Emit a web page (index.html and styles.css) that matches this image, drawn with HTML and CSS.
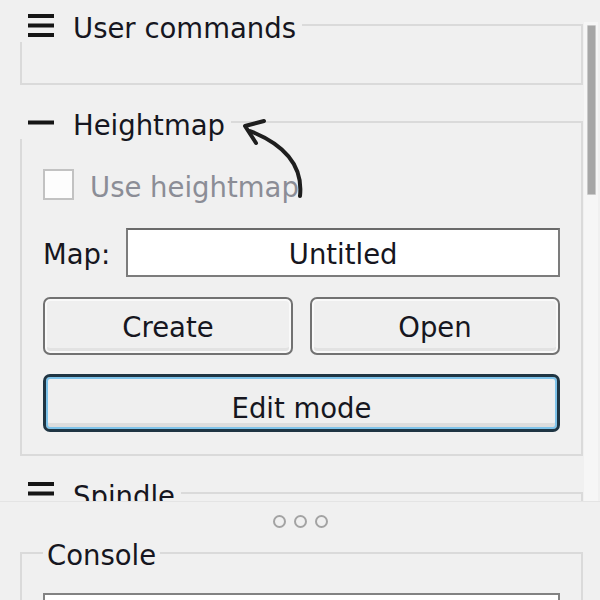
FILE: index.html
```html
<!DOCTYPE html>
<html>
<head>
<meta charset="utf-8">
<link rel="stylesheet" href="styles.css">
</head>
<body>
<div class="dock">
  <div class="scroll">
    <div class="content">
      <fieldset class="group">
        <legend class="title">
          <svg class="ico" width="26" height="23" viewBox="0 0 26 23"><rect x="0" y="0" width="26" height="4"/><rect x="0" y="9.5" width="26" height="4"/><rect x="0" y="19" width="26" height="4"/></svg>
          <span class="ttext">User commands</span>
        </legend>
        <div class="empty"></div>
      </fieldset>
      <fieldset class="group">
        <legend class="title">
          <svg class="ico" width="26" height="23" viewBox="0 0 26 23"><rect x="0" y="9.5" width="26" height="4"/></svg>
          <span class="ttext">Heightmap</span>
        </legend>
        <div class="body">
          <label class="checkrow"><span class="check"></span><span class="ctext">Use heightmap</span></label>
          <div class="maprow"><span class="lbl">Map:</span><div class="input">Untitled</div></div>
          <div class="btnrow"><div class="btn">Create</div><div class="btn">Open</div></div>
          <div class="btn default">Edit mode</div>
        </div>
      </fieldset>
      <fieldset class="group">
        <legend class="title">
          <svg class="ico" width="26" height="23" viewBox="0 0 26 23"><rect x="0" y="0" width="26" height="4"/><rect x="0" y="9.5" width="26" height="4"/><rect x="0" y="19" width="26" height="4"/></svg>
          <span class="ttext">Spindle</span>
        </legend>
        <div class="spacer"></div>
      </fieldset>
    </div>
    <div class="vscroll"><div class="thumb"></div></div>
  </div>
  <div class="splitter"><span class="dot"></span><span class="dot"></span><span class="dot"></span></div>
  <fieldset class="group console">
    <legend class="ctitle">Console</legend>
    <div class="textedit"></div>
  </fieldset>
</div>
<svg class="arrow" width="600" height="600" viewBox="0 0 600 600">
  <path d="M 300 196 C 303 168, 288 146, 250 131" />
  <path d="M 264 121 L 245 126 L 256 143" />
</svg>
</body>
</html>
```
FILE: styles.css
```css
html, body {
  margin: 0;
  padding: 0;
}
body {
  width: 600px;
  height: 600px;
  overflow: hidden;
  position: relative;
  background: #f0f0f0;
  font-family: "DejaVu Sans", "Liberation Sans", sans-serif;
  font-size: 27.5px;
  color: #161620;
}
.dock {
  display: flex;
  flex-direction: column;
}
.scroll {
  display: flex;
  height: 501px;
  overflow: hidden;
  border-bottom: 1px solid #e4e4e4;
}
.content {
  flex: none;
  width: 563px;
  padding: 8px 0 0 20px;
  display: flex;
  flex-direction: column;
  gap: 20px;
}
.group {
  margin: 0;
  padding: 0;
  min-width: 0;
  border: 2px solid #dadada;
}
.title {
  display: flex;
  align-items: center;
  gap: 19px;
  height: 34px;
  line-height: 34px;
  margin-left: -2px;
  padding: 0 6px 0 8px;
  background: #f0f0f0;
}
.ttext {
  margin-top: 5px;
}
.ico {
  fill: #151515;
  display: block;
}
.empty {
  height: 41px;
}
.spacer {
  height: 120px;
}
.body {
  display: flex;
  flex-direction: column;
  gap: 20px;
  padding: 30px 21px 22px 21px;
}
.checkrow {
  display: flex;
  align-items: center;
  gap: 16px;
  height: 31px;
  margin-bottom: 8px;
  color: #8b8d96;
}
.ctext {
  margin-top: 4px;
}
.check {
  width: 27px;
  height: 27px;
  border: 2px solid #c2c2c2;
  background: #fdfdfd;
  flex: none;
}
.maprow {
  display: flex;
  align-items: center;
  gap: 16px;
  height: 49px;
}
.lbl {
  flex: none;
  padding-top: 3px;
}
.input {
  flex: 1;
  height: 45px;
  line-height: 48px;
  text-align: center;
  background: #ffffff;
  border: 2px solid #7c7c7c;
  border-top-color: #6a6a6a;
  color: #161620;
}
.btnrow {
  display: grid;
  grid-template-columns: 1fr 1fr;
  gap: 17px;
}
.btn {
  height: 54px;
  line-height: 56px;
  text-align: center;
  border: 2px solid #727272;
  border-radius: 7px;
  background: #efefef;
  box-shadow: inset 0 0 0 2px #f9f9f9, inset 0 -5px 0 #e2e2e2;
}
.btn.default {
  height: 52px;
  line-height: 62px;
  margin-top: -1px;
  border: 3px solid #1f3543;
  box-shadow: inset 0 0 0 2px #7ec3ea, inset 0 -6px 0 #dddddd;
}
.vscroll {
  flex: none;
  width: 14px;
  margin: 22px 0 0 1px;
  background: #f6f6f6;
}
.thumb {
  width: 7px;
  height: 168px;
  margin: 3px 0 0 3px;
  background: #a6a6a6;
  border: 1px solid #c9c9c9;
  border-radius: 1px;
}
.splitter {
  height: 34px;
  padding-top: 13px;
  box-sizing: border-box;
  display: flex;
  justify-content: center;
  gap: 8px;
}
.dot {
  width: 9px;
  height: 9px;
  border: 2.5px solid #a3a3a3;
  border-radius: 50%;
}
.console {
  margin: 0 17px 0 20px;
}
.ctitle {
  height: 34px;
  line-height: 38px;
  margin-left: 21px;
  padding: 0 4px;
}
.textedit {
  height: 60px;
  margin: 23px 21px 0 21px;
  background: #ffffff;
  border: 2px solid #828282;
}
.arrow {
  position: absolute;
  left: 0;
  top: 0;
  pointer-events: none;
  fill: none;
  stroke: #1e1e1e;
  stroke-width: 4;
  stroke-linecap: round;
  stroke-linejoin: round;
}
```
